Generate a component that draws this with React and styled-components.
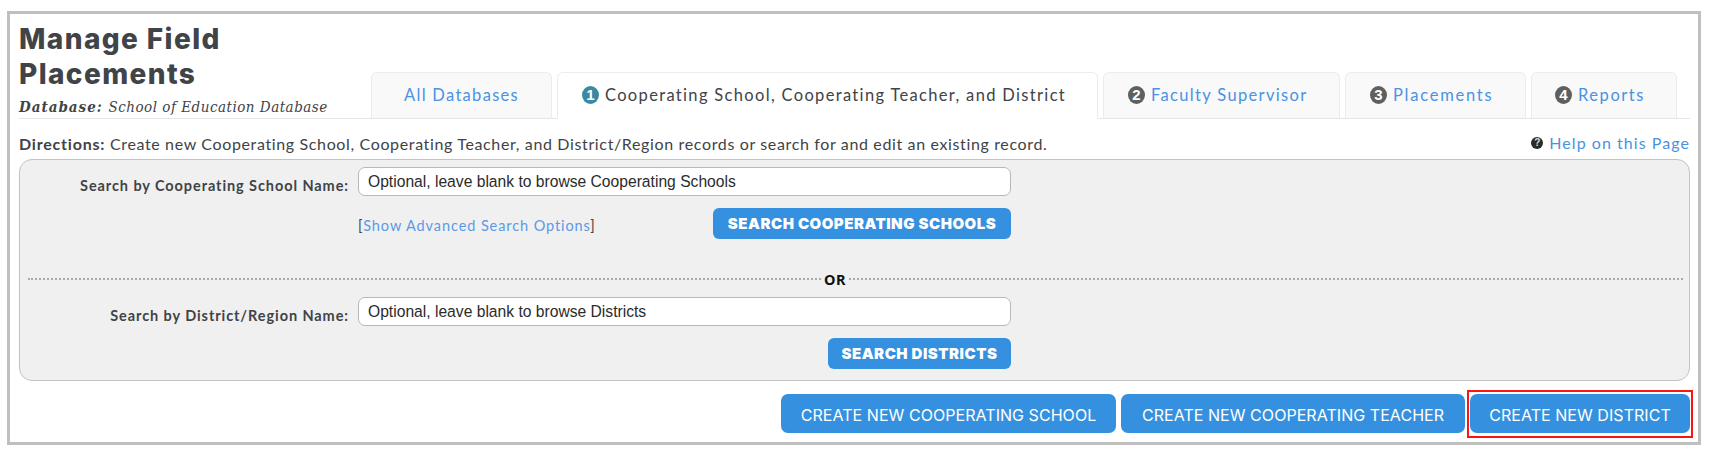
import React from 'react';
import styled, { createGlobalStyle } from 'styled-components';

const tabs = [
    { label: "All Databases", width: 181, pad: 32, spacing: 1.3 },
    { number: 1, label: "Cooperating School, Cooperating Teacher, and District", width: 541, pad: 24, spacing: 1.33, active: true },
    { number: 2, label: "Faculty Supervisor", width: 237, pad: 24, spacing: 1.34 },
    { number: 3, label: "Placements", width: 181, pad: 24, spacing: 1.75 },
    { number: 4, label: "Reports", width: 146, pad: 23, spacing: 1.55 },
]

export default function App() {

    return (
        <>
            <GlobalStyle />
            <Page>
                <Header>
                    <Heading>
                        <Title>Manage Field Placements</Title>
                        <Database><strong>Database: </strong>School of Education Database</Database>
                    </Heading>
                    <Tabs>
                        {tabs.map((tab) => (
                            <Tab key={tab.label} $width={tab.width} $pad={tab.pad} $spacing={tab.spacing} $active={tab.active}>
                                {tab.number && <Badge $active={tab.active}>{tab.number}</Badge>}
                                <span>{tab.label}</span>
                            </Tab>
                        ))}
                    </Tabs>
                </Header>

                <Directions>
                    <p><strong>Directions: </strong>Create new Cooperating School, Cooperating Teacher, and District/Region records or search for and edit an existing record.</p>
                    <Help><HelpIcon>?</HelpIcon><span>Help on this Page</span></Help>
                </Directions>

                <SearchPanel>
                    <SearchRow>
                        <Label htmlFor="school">Search by Cooperating School Name:</Label>
                        <Input id="school" defaultValue="Optional, leave blank to browse Cooperating Schools" />
                    </SearchRow>
                    <ActionRow>
                        <Advanced>[<a>Show Advanced Search Options</a>]</Advanced>
                        <SearchButton $width={298}>Search Cooperating Schools</SearchButton>
                    </ActionRow>

                    <Divider><Dots $width={793} /><span>OR</span><Dots /></Divider>

                    <SearchRow>
                        <Label htmlFor="district">Search by District/Region Name:</Label>
                        <Input id="district" defaultValue="Optional, leave blank to browse Districts" />
                    </SearchRow>
                    <ActionRow>
                        <SearchButton $width={183}>Search Districts</SearchButton>
                    </ActionRow>
                </SearchPanel>

                <Footer>
                    <CreateButton $width={335}>Create New Cooperating School</CreateButton>
                    <CreateButton $width={344}>Create New Cooperating Teacher</CreateButton>
                    <Highlight>
                        <CreateButton $width={220}>Create New District</CreateButton>
                    </Highlight>
                </Footer>
            </Page>
        </>
    );
}

const GlobalStyle = createGlobalStyle`
    * {
        box-sizing: border-box;
    }

    body {
        margin: 0;
        background: #fff;
        font-family: Lato, "Liberation Sans", sans-serif;
        color: #404347;
    }
`

const Page = styled.div`
    width: 1694px;
    height: 434px;
    margin: 11px 0 0 7px;
    padding: 4px 8px 0 9px;
    border: 3px solid #bfbfbf;
`

const Header = styled.header`
    display: flex;
    align-items: flex-end;
    width: 1671px;
    height: 101px;
    border-bottom: 1px solid #e6e6e6;
`

const Heading = styled.div`
    width: 352px;
    height: 100px;
`

const Title = styled.h1`
    width: 260px;
    margin: 0;
    padding-top: 4px;
    font: 800 28px/35px Inter, sans-serif;
    letter-spacing: 1.4px;
`

const Database = styled.p`
    margin: 5px 0 0;
    font: italic 15px/20px "DejaVu Serif Condensed", "DejaVu Serif", "Liberation Serif", serif;
    letter-spacing: 0.5px;
    white-space: nowrap;

    strong {
        letter-spacing: 1px;
    }
`

const Tabs = styled.nav`
    display: flex;
    gap: 5px;
    height: 47px;
    margin-bottom: -1px;
`

const Tab = styled.div`
    display: flex;
    align-items: center;
    gap: 6px;
    width: ${(p) => p.$width}px;
    height: 47px;
    padding: 0 0 1px ${(p) => p.$pad}px;
    border: 1px solid #ececec;
    border-bottom-color: ${(p) => (p.$active ? "#fff" : "#e6e6e6")};
    border-radius: 6px 6px 0 0;
    background: ${(p) => (p.$active ? "#fff" : "#f9f9f9")};
    color: ${(p) => (p.$active ? "#404347" : "#4a92e3")};
    font-size: 16.5px;
    letter-spacing: ${(p) => p.$spacing}px;
    white-space: nowrap;
`

const Badge = styled.span`
    width: 17px;
    height: 18px;
    border-radius: 50%;
    background: ${(p) => (p.$active ? "#368ba3" : "#5f5f5f")};
    color: #fff;
    font: 700 15px/18px "Liberation Sans", sans-serif;
    letter-spacing: 0;
    text-align: center;
`

const Directions = styled.div`
    display: flex;
    justify-content: space-between;
    height: 40px;
    padding-top: 15px;
    font-size: 16px;
    line-height: 20px;
    letter-spacing: 0.64px;
    white-space: nowrap;

    p {
        margin: 0;
    }

    strong {
        letter-spacing: 0.8px;
    }
`

const Help = styled.div`
    display: flex;
    align-items: center;
    gap: 6px;
    height: 17px;
    color: #4a92e3;
    letter-spacing: 1.05px;
`

const HelpIcon = styled.span`
    width: 12px;
    height: 12px;
    border-radius: 50%;
    background: #2b2b2b;
    color: #ddd;
    font: 700 10px/12px "Liberation Sans", sans-serif;
    letter-spacing: 0;
    text-align: center;
`

const SearchPanel = styled.section`
    width: 1671px;
    height: 222px;
    padding-top: 7px;
    border: 1px solid #c3c3c3;
    border-radius: 13px;
    background: #f0f0f0;
`

const SearchRow = styled.div`
    display: flex;
    align-items: center;
`

const Label = styled.label`
    width: 338px;
    padding: 7px 9px 0 0;
    font-size: 14.5px;
    font-weight: 700;
    letter-spacing: 0.92px;
    text-align: right;
    white-space: nowrap;
`

const Input = styled.input`
    width: 653px;
    height: 29px;
    padding: 0 9px;
    border: 1px solid #b8b8b8;
    border-radius: 7px;
    background: #fff;
    color: #2b2b2b;
    font: 15.65px "Liberation Sans", sans-serif;
`

const ActionRow = styled.div`
    display: flex;
    width: 991px;
    height: 31px;
    margin-top: 12px;
    padding-left: 338px;
`

const Advanced = styled.div`
    font-size: 14.5px;
    line-height: 36px;
    letter-spacing: 0.91px;

    a {
        color: #5b99e6;
    }
`

const SearchButton = styled.button`
    width: ${(p) => p.$width}px;
    height: 31px;
    margin-left: auto;
    padding: 0;
    border: 0;
    border-radius: 6px;
    background: #3591e0;
    color: #fff;
    font: 900 15px Inter, sans-serif;
    letter-spacing: 0.5px;
    text-transform: uppercase;
`

const Divider = styled.div`
    display: flex;
    align-items: center;
    gap: 3px;
    height: 16px;
    margin: 32px 6px 10px 8px;
    color: #111;
    font: 700 14.5px "Noto Sans", sans-serif;
    letter-spacing: 0.6px;
`

const Dots = styled.div`
    flex: ${(p) => (p.$width ? `0 0 ${p.$width}px` : "1")};
    border-top: 2px dotted #aaa;
`

const Footer = styled.footer`
    display: flex;
    justify-content: flex-end;
    gap: 5px;
    width: 1671px;
    padding-top: 13px;
`

const CreateButton = styled.button`
    display: block;
    width: ${(p) => p.$width}px;
    height: 39px;
    padding: 2px 0 0;
    border: 0;
    border-radius: 7px;
    background: #3591e0;
    color: #fff;
    font: 400 16px Inter, sans-serif;
    letter-spacing: 0.05px;
    text-transform: uppercase;
`

const Highlight = styled.div`
    margin: -4px -3px -5px;
    padding: 2px 1px 3px;
    border: 2px solid #fb1414;
`
